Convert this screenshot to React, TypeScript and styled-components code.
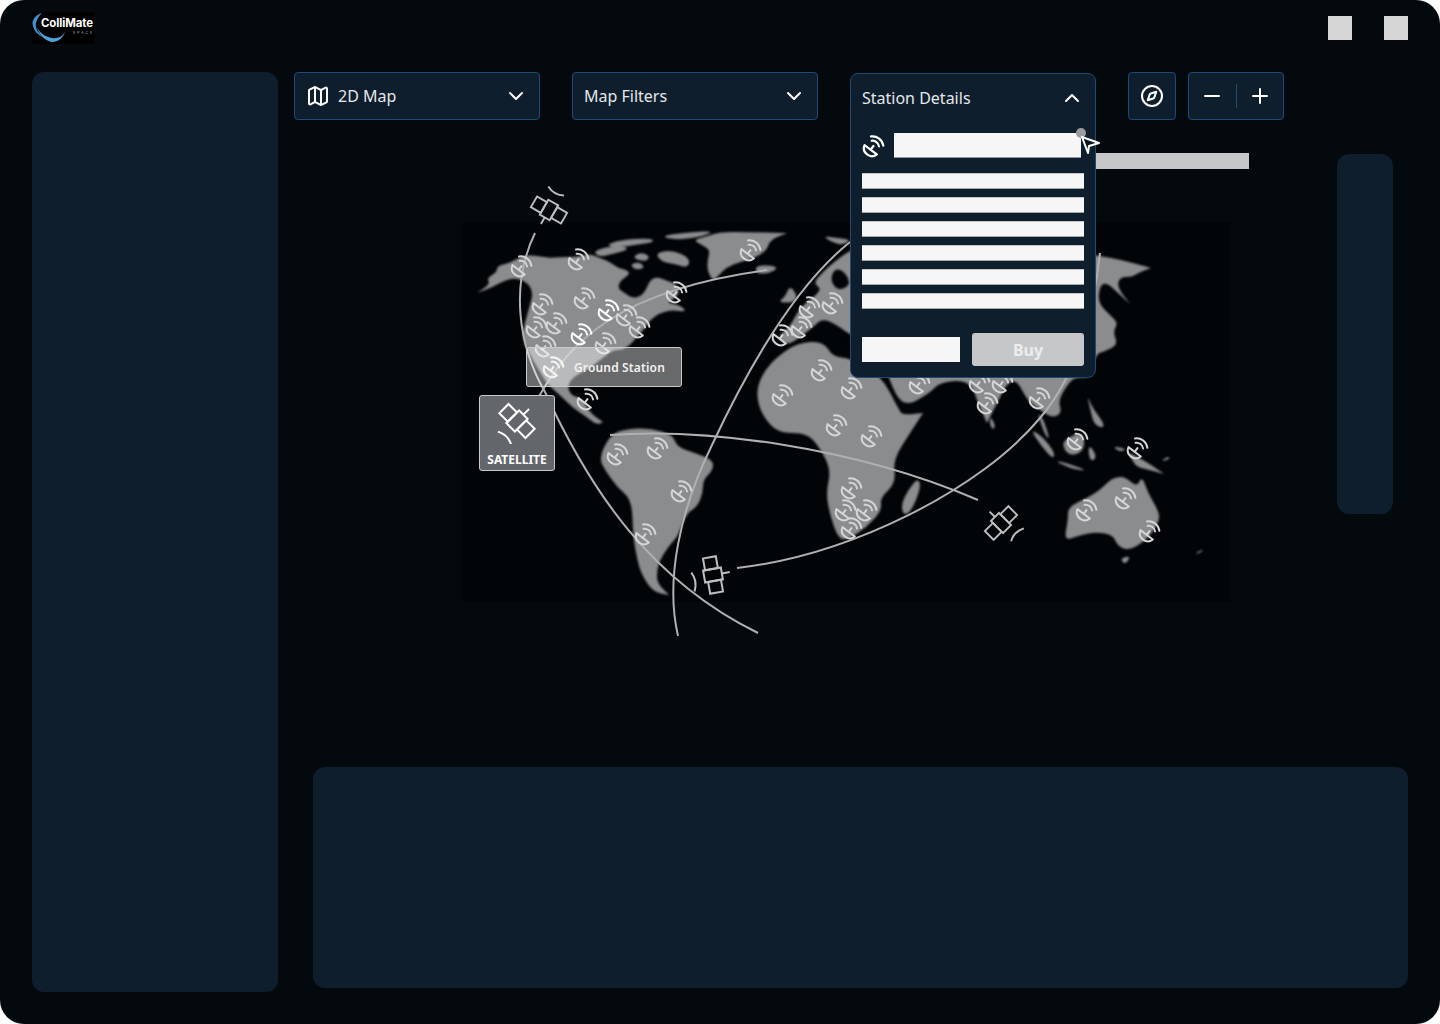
import React from "react";
import styled, { createGlobalStyle } from "styled-components";
import { ChevronDown, ChevronUp, Compass, Map as MapIcon, Minus, Plus } from "lucide-react";

const Global = createGlobalStyle`
  html, body { margin: 0; padding: 0; background: #ffffff; }
  body { font-family: "Noto Sans", "Open Sans", sans-serif; }
  * { box-sizing: border-box; }
`;

const Frame = styled.div`
  width: 1440px;
  height: 1024px;
  background: #04090e;
  border-radius: 24px;
  overflow: hidden;
  display: flex;
  flex-direction: column;
`;

const TopBar = styled.header`
  height: 72px;
  padding: 12px 32px 0;
  display: flex;
  justify-content: space-between;
  align-items: flex-start;
`;

const Logo = styled.div`
  position: relative;
  width: 62px;
  height: 32px;
  background: #000;
  overflow: hidden;
`;

const LogoName = styled.span`
  position: absolute;
  left: 9px;
  top: 4px;
  font-family: Inter, sans-serif;
  font-size: 11.4px;
  line-height: 14px;
  font-weight: 700;
  letter-spacing: -0.1px;
  color: #fff;
  white-space: nowrap;
`;

const LogoSub = styled.span`
  position: absolute;
  right: 0;
  top: 18px;
  font-family: Inter, sans-serif;
  font-size: 4px;
  line-height: 6px;
  letter-spacing: 1.7px;
  color: #9aa4ad;
`;

const WindowControls = styled.div`
  display: flex;
  gap: 32px;
  padding-top: 4px;
`;

const WindowButton = styled.div`
  width: 24px;
  height: 24px;
  background: #d6d6d6;
`;

const Workspace = styled.div`
  flex: 1;
  display: flex;
  gap: 16px;
  padding: 0 32px 32px;
  min-height: 0;
`;

const Sidebar = styled.aside`
  width: 246px;
  background: #0f1e2d;
  border-radius: 12px;
`;

const Content = styled.main`
  flex: 1;
  display: flex;
  flex-direction: column;
  min-width: 0;
`;

const Toolbar = styled.div`
  position: relative;
  z-index: 3;
  display: flex;
  gap: 32px;
  height: 48px;
`;

const Dropdown = styled.div`
  width: 246px;
  height: 48px;
  display: flex;
  align-items: center;
  gap: 8px;
  padding: 0 11px;
  background: #0f1e2d;
  border: 1px solid #1f4a75;
  border-radius: 4px;
  color: #e4e7ea;
  font-size: 16px;
  svg { flex: none; color: #fff; }
`;

const DropdownLabel = styled.span`
  flex: 1;
`;

const IconGroup = styled.div`
  display: flex;
  gap: 12px;
`;

const ToolButton = styled.div`
  height: 48px;
  display: flex;
  align-items: center;
  justify-content: center;
  padding: 0 11px;
  background: #0f1e2d;
  border: 1px solid #1f4a75;
  border-radius: 4px;
  color: #fff;
`;

const ZoomDivider = styled.span`
  width: 1px;
  height: 24px;
  margin: 0 11.5px;
  background: #1f4a75;
`;

const StationSlot = styled.div`
  position: relative;
  width: 246px;
  height: 48px;
`;

const StationPanel = styled.section`
  position: absolute;
  top: 1px;
  left: 0;
  width: 246px;
  height: 305px;
  padding: 12px 11px 11px;
  background: #0f1e2d;
  border: 1px solid #1f4a75;
  border-radius: 8px;
  z-index: 2;
`;

const PanelHeader = styled.div`
  height: 24px;
  display: flex;
  align-items: center;
  justify-content: space-between;
  color: #e4e7ea;
  font-size: 16px;
  svg { color: #fff; }
`;

const NameRow = styled.div`
  display: flex;
  align-items: center;
  gap: 8px;
  margin-top: 23px;
  color: #fff;
`;

const NameField = styled.div`
  width: 187px;
  height: 25px;
  background: #f6f6f6;
  border-bottom: 1px solid #8f959b;
`;

const Fields = styled.div`
  display: flex;
  flex-direction: column;
  gap: 8px;
  margin-top: 15px;
`;

const FieldBar = styled.div`
  height: 16px;
  background: #f6f6f6;
  border-top: 1px solid #c4c7ca;
  border-bottom: 1px solid #a3a8ad;
`;

const PanelFooter = styled.div`
  display: flex;
  align-items: center;
  gap: 12px;
  margin-top: 24px;
`;

const QtyField = styled.div`
  width: 98px;
  height: 25px;
  background: #f6f6f6;
`;

const BuyButton = styled.div`
  width: 112px;
  height: 33px;
  display: flex;
  align-items: center;
  justify-content: center;
  background: #c6c7c9;
  border-radius: 3px;
  color: #eceded;
  font-size: 16px;
  font-weight: 700;
`;

const GreyBar = styled.div`
  position: absolute;
  top: 81px;
  left: 246px;
  width: 153px;
  height: 16px;
  background: #c6c7c9;
`;

const DragDot = styled.span`
  position: absolute;
  left: 226px;
  top: 56px;
  width: 10px;
  height: 10px;
  border-radius: 50%;
  background: #9a9c9f;
  z-index: 3;
`;

const CursorIcon = styled.svg`
  position: absolute;
  left: 229px;
  top: 60px;
  z-index: 4;
`;

const Stage = styled.div`
  position: relative;
  flex: 1;
  display: flex;
  justify-content: flex-end;
  padding: 34px 15px 0 0;
  min-height: 0;
`;

const MapCanvas = styled.svg`
  position: absolute;
  left: 0;
  top: 0;
`;

const MapBackdrop = styled.rect`
  fill: #020508;
`;

const Continents = styled.g`
  filter: blur(0.8px);
`;

const Land = styled.path`
  fill: #8b8c8e;
`;

const Sea = styled.path`
  fill: #020508;
`;

const Orbit = styled.path`
  fill: none;
  stroke: #afb0b2;
  stroke-width: 2;
`;

const RightRail = styled.aside`
  position: relative;
  width: 56px;
  height: 360px;
  background: #0f1e2d;
  border-radius: 12px;
`;

const GroundTip = styled.div`
  position: absolute;
  left: 232px;
  top: 227px;
  width: 156px;
  height: 40px;
  display: flex;
  align-items: center;
  gap: 8px;
  padding-left: 15px;
  background: rgba(255, 255, 255, 0.4);
  border: 1px solid #c9cacc;
  border-radius: 3px;
  color: #f2f2f2;
  font-size: 12px;
  font-weight: 600;
  letter-spacing: 0.15px;
`;

const SatelliteTip = styled.div`
  position: absolute;
  left: 185px;
  top: 275px;
  width: 76px;
  height: 76px;
  display: flex;
  flex-direction: column;
  align-items: center;
  padding-top: 2px;
  background: #63676b;
  border: 1px solid #c9cacc;
  border-radius: 3px;
  color: #fff;
  font-size: 12px;
  line-height: 15px;
  font-weight: 700;
`;

const SatLabel = styled.span`
  margin-top: 8px;
`;

const BottomPanel = styled.section`
  height: 221px;
  margin: 0 0 4px 19px;
  background: #0f1e2d;
  border-radius: 12px;
`;

const DISHES: [number, number, string?][] = [
  [522, 266], [579, 259], [751, 250], [677, 292], [543, 304], [585, 298], [609, 310, "#fff"], [627, 315],
  [640, 327], [537, 327], [557, 323], [582, 334, "#fff"], [606, 343], [546, 346], [588, 399, "#d9d9d9"],
  [822, 370], [783, 395], [837, 425], [783, 335], [802, 327], [810, 307], [833, 303], [852, 388],
  [618, 454], [658, 448], [682, 491], [646, 534], [872, 436], [852, 488], [846, 510], [867, 510], [852, 528],
  [920, 383], [980, 382], [1003, 382], [988, 403], [1040, 398], [1078, 439], [1138, 448], [1126, 498], [1087, 510], [1150, 531],
];

// Closed smooth outline: every point is a control point, midpoints are on the curve.
const blob = (pts: number[][]) => {
  const mid = (a: number[], b: number[]) => [(a[0] + b[0]) / 2, (a[1] + b[1]) / 2];
  const first = mid(pts[pts.length - 1], pts[0]);
  let d = `M${first[0]} ${first[1]}`;
  pts.forEach((p, i) => {
    const m = mid(p, pts[(i + 1) % pts.length]);
    d += `Q${p[0]} ${p[1]} ${m[0]} ${m[1]}`;
  });
  return d + "Z";
};

const LAND: number[][][] = [
  // North and Central America
  [[477,293],[477,293],[490,284],[487,278],[497,272],[497,266],[510,263],[522,256],[533,255],[548,258],[560,257],[575,257],[590,254],[600,258],[610,262],[618,268],[627,270],[630,274],[620,281],[618,288],[623,292],[632,298],[640,297],[646,290],[650,280],[657,277],[668,281],[676,284],[680,293],[672,300],[667,303],[680,305],[687,312],[672,310],[660,313],[650,320],[645,328],[636,338],[630,345],[622,350],[613,350],[600,360],[590,368],[573,377],[567,387],[572,396],[582,398],[590,413],[603,422],[603,422],[597,425],[584,415],[573,408],[560,395],[548,385],[540,372],[527,350],[522,337],[525,322],[530,305],[533,293],[528,283],[517,278],[505,280],[493,287]],
  // Arctic islands
  [[593,252],[605,247],[625,246],[628,250],[612,254],[600,257]],
  [[606,245],[620,240],[650,238],[655,242],[635,245],[615,248]],
  [[660,236],[690,232],[715,231],[700,237],[675,240]],
  [[655,253],[672,250],[690,258],[688,268],[675,264],[662,262]],
  [[640,252],[650,256],[646,262],[632,258]],
  [[630,264],[640,262],[645,268],[635,270]],
  // Greenland
  [[693,240],[708,236],[720,232],[745,232],[787,233],[787,233],[770,240],[767,250],[755,258],[740,262],[727,267],[718,276],[713,281],[707,270],[708,258],[710,250],[702,245]],
  [[755,266],[770,265],[778,268],[770,273],[757,274]],
  // South America
  [[610,435],[625,429],[650,428],[673,435],[677,447],[695,453],[713,460],[713,470],[703,480],[703,493],[697,507],[687,513],[680,530],[677,537],[668,547],[660,560],[657,570],[657,583],[669,595],[669,595],[653,592],[642,575],[638,563],[633,537],[632,500],[617,487],[605,470],[599,458]],
  // Africa
  [[757,387],[765,370],[777,357],[797,343],[823,341],[833,357],[850,358],[881,375],[899,410],[903,415],[923,413],[923,413],[910,433],[893,460],[896,483],[880,498],[882,510],[867,527],[847,540],[838,538],[830,515],[826,493],[831,470],[820,448],[807,433],[780,433],[767,422],[758,405]],
  // Madagascar
  [[918,478],[921,487],[912,510],[904,516],[901,505],[908,490]],
  // Eurasia
  [[813,283],[823,272],[833,263],[850,250],[880,240],[1000,240],[1098,256],[1113,258],[1133,263],[1151,268],[1151,268],[1140,272],[1132,277],[1120,277],[1117,287],[1130,304],[1130,304],[1117,292],[1107,283],[1100,285],[1098,303],[1110,315],[1118,323],[1113,332],[1118,345],[1103,352],[1096,354],[1090,378],[1077,377],[1070,381],[1058,400],[1062,413],[1052,418],[1040,410],[1027,400],[1017,380],[1007,383],[997,403],[987,423],[987,423],[978,403],[970,380],[940,382],[930,393],[903,408],[888,378],[880,345],[850,335],[840,327],[823,318],[813,327],[803,335],[787,346],[777,337],[790,327],[800,307],[823,290]],
  // British Isles, Svalbard, Sri Lanka
  [[778,302],[785,297],[790,285],[798,297],[792,303]],
  [[821,236],[838,238],[852,240],[840,246]],
  [[990,416],[995,424],[994,430],[990,426]],
  // Malay Peninsula, Sumatra, Java, Borneo, Sulawesi, Philippines
  [[1037,412],[1043,418],[1050,440],[1045,435]],
  [[1030,429],[1043,437],[1055,453],[1053,459],[1042,447]],
  [[1053,460],[1070,464],[1088,471],[1072,469]],
  [[1063,440],[1083,431],[1085,450],[1072,456],[1064,450]],
  [[1090,445],[1097,457],[1091,462],[1088,452]],
  [[1087,395],[1092,407],[1103,422],[1104,428],[1094,425],[1090,408]],
  // New Guinea and neighbours
  [[1128,452],[1137,457],[1147,462],[1164,474],[1164,474],[1150,470],[1137,467],[1132,460]],
  [[1112,446],[1127,449],[1120,452]],
  [[1160,461],[1170,456],[1168,460]],
  // Australia
  [[1068,507],[1087,498],[1100,490],[1110,480],[1117,477],[1125,477],[1137,487],[1142,476],[1148,493],[1158,510],[1160,520],[1147,540],[1128,551],[1117,545],[1113,535],[1097,532],[1080,535],[1064,541],[1068,520]],
  [[1120,558],[1131,556],[1125,565]],
  [[1194,554],[1204,549],[1200,553]],
];

const SEAS: number[][][] = [
  [[835,268],[845,272],[851,285],[838,291],[830,280]],
  [[825,322],[838,326],[850,338],[840,336]],
];

const SatelliteShape: React.FC<{ stroke: string; width: number }> = ({ stroke, width }) => (
  <g fill="none" stroke={stroke} strokeWidth={width}>
    <rect x={-7} y={-18} width={13} height={12} />
    <rect x={-9} y={-6} width={18} height={12} />
    <rect x={-6} y={6} width={13} height={12} />
    <path d="M9 0L17 0" />
    <path d="M-21 -6Q-16 3 -21 13" />
  </g>
);

const DISH_PARTS = (
  <>
    <path d="M4 10a7.31 7.31 0 0 0 10 10Z" />
    <path d="m9 15 3-3" />
    <path d="M17 13a6 6 0 0 0-6-6" />
    <path d="M21 13A10 10 0 0 0 11 3" />
  </>
);

const Dish: React.FC<{ x: number; y: number; color?: string }> = ({ x, y, color = "#d4d5d7" }) => (
  <g transform={`translate(${x} ${y}) rotate(-8) scale(1.1) translate(-12.5 -12)`} fill="none" stroke={color} strokeWidth={1.8} strokeLinecap="round" strokeLinejoin="round">
    {DISH_PARTS}
  </g>
);

const DishIcon: React.FC<{ size: number }> = ({ size }) => (
  <svg width={size} height={size} viewBox="1.5 1 22 22" fill="none" stroke="currentColor" strokeWidth={2} strokeLinecap="round" strokeLinejoin="round" style={{ flex: "none" }}>
    <g transform="rotate(-8 12 12)">{DISH_PARTS}</g>
  </svg>
);

const WorldMap = () => (
  <MapCanvas width={1114} height={647} viewBox="294 120 1114 647">
    <MapBackdrop x={462} y={222} width={768} height={380} />
    <Continents>
      {LAND.map((pts, i) => (
        <Land key={i} d={blob(pts)} />
      ))}
      {SEAS.map((pts, i) => (
        <Sea key={i} d={blob(pts)} />
      ))}
    </Continents>
    <Orbit d="M535 233C510 285 518 345 545 392C590 490 650 580 758 633" />
    <Orbit d="M850 242C790 290 740 385 712 445C680 510 665 580 678 636" />
    <Orbit d="M610 435C700 428 850 445 978 500" />
    <Orbit d="M737 568C850 555 980 490 1040 418C1080 372 1095 300 1100 253" />
    <Orbit d="M537 400C570 340 620 290 767 270" />
    {DISHES.map(([x, y, c]) => (
      <Dish key={`${x}-${y}`} x={x} y={y} color={c} />
    ))}
    <g transform="translate(549 210) rotate(120) scale(0.95)">
      <SatelliteShape stroke="#bdbec0" width={2} />
    </g>
    <g transform="translate(713 575) rotate(-10)">
      <SatelliteShape stroke="#bdbec0" width={2} />
    </g>
    <g transform="translate(1001 523) rotate(225) scale(0.95)">
      <SatelliteShape stroke="#bdbec0" width={2} />
    </g>
  </MapCanvas>
);

export default function App() {
  return (
    <>
      <Global />
      <Frame>
        <TopBar>
          <Logo>
            <svg width={62} height={32} viewBox="0 0 62 32" style={{ display: "block" }}>
              <path d="M10 1C3 3-1 9 1 14C2 19 6 23 11 25C6 21 3 16 4 11C5 7 7 4 10 1Z" fill="#3f8fd0" />
              <path d="M5 16C8 24 14 29 20 30C26 30 31 26 33 20C30 25 25 27 20 26C14 25 9 22 5 16Z" fill="#4aa3dc" />
            </svg>
            <LogoName>ColliMate</LogoName>
            <LogoSub>SPACE</LogoSub>
          </Logo>
          <WindowControls>
            <WindowButton />
            <WindowButton />
          </WindowControls>
        </TopBar>
        <Workspace>
          <Sidebar />
          <Content>
            <Toolbar>
              <Dropdown>
                <MapIcon size={24} strokeWidth={2} />
                <DropdownLabel>2D Map</DropdownLabel>
                <ChevronDown size={24} strokeWidth={2} />
              </Dropdown>
              <Dropdown>
                <DropdownLabel>Map Filters</DropdownLabel>
                <ChevronDown size={24} strokeWidth={2} />
              </Dropdown>
              <StationSlot>
                <GreyBar />
                <StationPanel>
                  <PanelHeader>
                    Station Details
                    <ChevronUp size={24} strokeWidth={2} />
                  </PanelHeader>
                  <NameRow>
                    <DishIcon size={24} />
                    <NameField />
                  </NameRow>
                  <Fields>
                    {[0, 1, 2, 3, 4, 5].map((i) => (
                      <FieldBar key={i} />
                    ))}
                  </Fields>
                  <PanelFooter>
                    <QtyField />
                    <BuyButton>Buy</BuyButton>
                  </PanelFooter>
                </StationPanel>
                <DragDot />
                <CursorIcon width={24} height={24} viewBox="0 0 24 24">
                  <path d="M3 5L20 11L10 14L9 21Z" fill="#0b1520" stroke="#fff" strokeWidth={2} strokeLinejoin="round" />
                </CursorIcon>
              </StationSlot>
              <IconGroup>
                <ToolButton>
                  <Compass size={24} strokeWidth={2} />
                </ToolButton>
                <ToolButton>
                  <Minus size={24} strokeWidth={2} />
                  <ZoomDivider />
                  <Plus size={24} strokeWidth={2} />
                </ToolButton>
              </IconGroup>
            </Toolbar>
            <Stage>
              <WorldMap />
              <GroundTip>
                <DishIcon size={24} />
                Ground Station
              </GroundTip>
              <SatelliteTip>
                <svg width={52} height={46} viewBox="-26 -23 52 46">
                  <g transform="rotate(-45)">
                    <SatelliteShape stroke="#fff" width={2} />
                  </g>
                </svg>
                <SatLabel>SATELLITE</SatLabel>
              </SatelliteTip>
              <RightRail />
            </Stage>
            <BottomPanel />
          </Content>
        </Workspace>
      </Frame>
    </>
  );
}
